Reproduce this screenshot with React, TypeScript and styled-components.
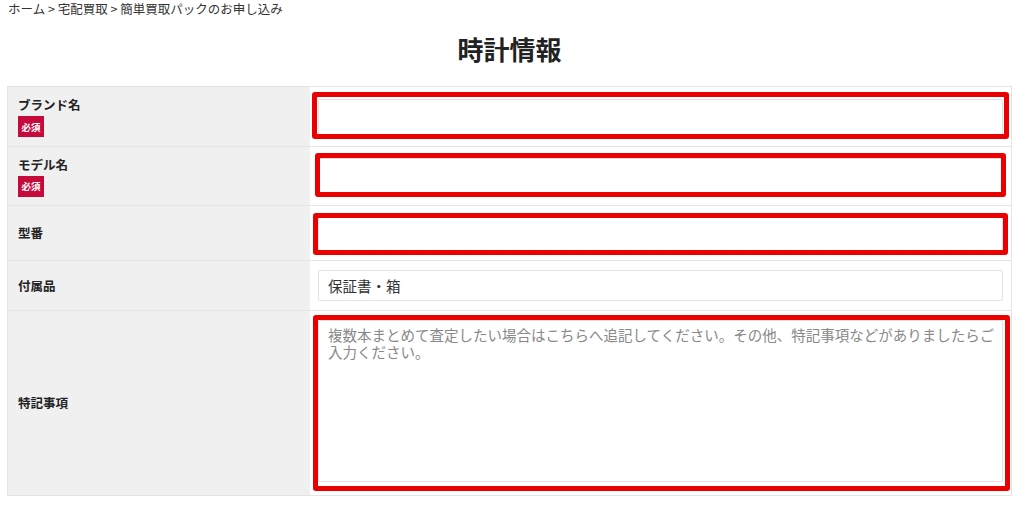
import { FunctionComponent, ReactNode } from 'react'
import styled, { createGlobalStyle } from 'styled-components'

const GlobalStyle = createGlobalStyle`
  html, body {
    margin: 0;
    padding: 0;
    background: #fff;
  }
  body {
    font-family: "Noto Sans CJK JP", "Noto Sans", sans-serif;
    color: #333;
  }
  * {
    box-sizing: border-box;
  }
`

const Page = styled.div`
  padding: 0 12px 0 7px;
`

const Breadcrumb = styled.nav`
  padding-left: 1px;
  font-size: 12.5px;
  line-height: 18px;
  color: #333;
`

const Title = styled.h1`
  margin: 15px 0 21px;
  text-align: center;
  font-size: 26px;
  line-height: 32px;
  font-weight: 700;
  color: #222;
`

const Table = styled.div`
  border: 1px solid #e4e4e4;
  border-bottom: none;
`

const Row = styled.div<{ $h: number }>`
  display: grid;
  grid-template-columns: 302px 1fr;
  height: ${({ $h }) => $h}px;
  border-bottom: 1px solid #e4e4e4;
`

const Label = styled.div`
  display: flex;
  flex-direction: column;
  justify-content: center;
  align-items: flex-start;
  padding: 0 10px;
  background: #f0f0f0;
  font-size: 12.5px;
  line-height: 18px;
  font-weight: 700;
  color: #222;
`

const Required = styled.span`
  display: inline-flex;
  align-items: center;
  justify-content: center;
  width: 26px;
  height: 21px;
  margin-top: 2px;
  background: #c70a3c;
  color: #fff;
  font-size: 9.5px;
  font-weight: 700;
`

const Value = styled.div<{ $top?: boolean }>`
  position: relative;
  display: flex;
  align-items: ${({ $top }) => ($top ? 'flex-start' : 'center')};
  padding: ${({ $top }) => ($top ? '9px 8px 0' : '0 8px')};
  background: #fff;
`

const Input = styled.input<{ $h?: number }>`
  width: 100%;
  height: ${({ $h }) => $h ?? 36}px;
  padding: 0 9px;
  border: 1px solid #e2e2e2;
  border-radius: 2px;
  background: #fff;
  font-family: inherit;
  font-size: 14.5px;
  color: #333;
  outline: none;
`

const TextArea = styled.textarea`
  width: 100%;
  height: 162px;
  padding: 5px 4px 8px 9px;
  border: 1px solid #e2e2e2;
  border-radius: 2px;
  background: #fff;
  font-family: inherit;
  font-size: 14.5px;
  line-height: 17px;
  color: #333;
  resize: none;
  outline: none;

  &::placeholder {
    color: #888;
  }
`

// red annotation frame drawn over the field
const Mark = styled.div<{ $inset: string }>`
  position: absolute;
  inset: ${({ $inset }) => $inset};
  border: 5px solid #ea0000;
  border-radius: 3px;
  pointer-events: none;
`

interface FieldRowProps {
  label: string
  required?: boolean
  height: number
  top?: boolean
  children: ReactNode
}

const FieldRow: FunctionComponent<FieldRowProps> = ({
  label,
  required,
  height,
  top,
  children,
}) => (
  <Row $h={height}>
    <Label>
      {label}
      {required && <Required>必須</Required>}
    </Label>
    <Value $top={top}>{children}</Value>
  </Row>
)

const App = () => {
  return (
    <>
      <GlobalStyle />
      <Page>
        <Breadcrumb>ホーム &gt; 宅配買取 &gt; 簡単買取パックのお申し込み</Breadcrumb>
        <Title>時計情報</Title>
        <Table>
          <FieldRow label="ブランド名" required height={60}>
            <Input />
            <Mark $inset="5px 2px 7px 2px" />
          </FieldRow>
          <FieldRow label="モデル名" required height={59}>
            <Input />
            <Mark $inset="6px 5px 8px 5px" />
          </FieldRow>
          <FieldRow label="型番" height={55}>
            <Input />
            <Mark $inset="7px 3px 5px 3px" />
          </FieldRow>
          <FieldRow label="付属品" height={50}>
            <Input $h={31} defaultValue="保証書・箱" />
          </FieldRow>
          <FieldRow label="特記事項" height={185} top>
            <TextArea placeholder="複数本まとめて査定したい場合はこちらへ追記してください。その他、特記事項などがありましたらご入力ください。" />
            <Mark $inset="4px 1px 4px 3px" />
          </FieldRow>
        </Table>
      </Page>
    </>
  )
}

export default App
